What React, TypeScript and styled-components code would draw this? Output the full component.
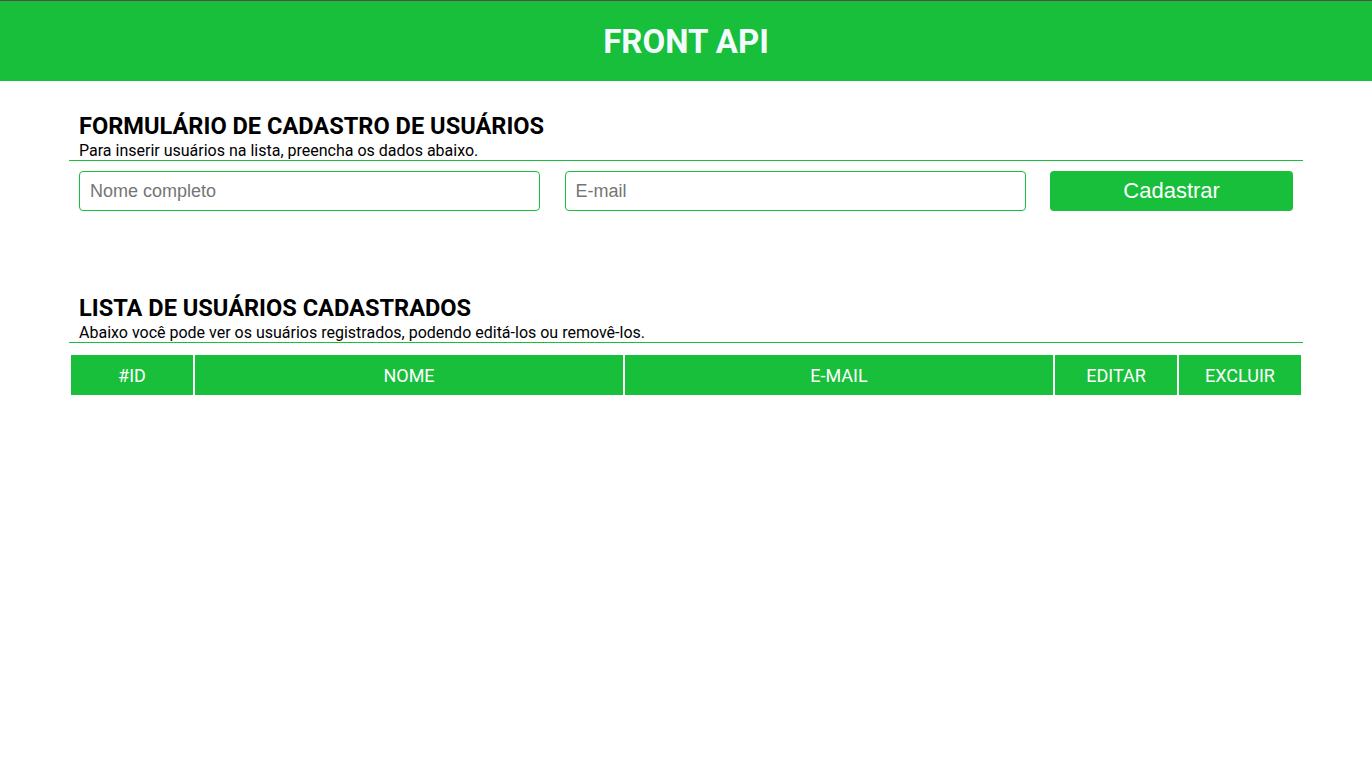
import React from "react";
import styled, { createGlobalStyle } from "styled-components";

const GREEN = "#17bf3b";

const Global = createGlobalStyle`
  html, body { margin: 0; padding: 0; background: #fff; }
  body { font-family: Roboto, "Liberation Sans", Arial, sans-serif; color: #000; }
  * { box-sizing: border-box; }
`;

const Header = styled.header`
  height: 81px;
  border-top: 1px solid #4d4d4d;
  background: ${GREEN};
  display: flex;
  align-items: center;
  justify-content: center;
`;

const Title = styled.h1`
  margin: 0;
  font-family: Roboto, sans-serif;
  font-weight: 700;
  font-size: 33px;
  color: #f4fbff;
  line-height: 1;
`;

const Main = styled.main`
  width: 1234px;
  margin: 0 auto;
`;

const Section = styled.section<{ $top: number }>`
  padding-top: ${(p) => p.$top}px;
`;

const SectionHead = styled.div`
  border-bottom: 1px solid ${GREEN};
  padding: 0 10px;
`;

const Heading = styled.h2`
  margin: 0;
  font-size: 23.6px;
  font-weight: 700;
  line-height: 29px;
`;

const Sub = styled.p`
  margin: 0;
  font-size: 16px;
  line-height: 19px;
`;

const FormRow = styled.form`
  display: grid;
  grid-template-columns: 38% 38% 1fr;
  column-gap: 2%;
  padding: 10px 10px 0;
`;

const Input = styled.input`
  height: 40px;
  border: 1px solid ${GREEN};
  border-radius: 4px;
  padding: 0 10px;
  font-family: "Liberation Sans", Arial, sans-serif;
  font-size: 18px;
  outline: none;
  &::placeholder { color: #757575; }
`;

const Button = styled.button`
  height: 40px;
  border: none;
  border-radius: 4px;
  background: ${GREEN};
  color: #fff;
  font-family: "Liberation Sans", Arial, sans-serif;
  font-size: 22px;
  cursor: pointer;
`;

const Table = styled.table`
  width: 1234px;
  margin-top: 10px;
  border-spacing: 2px;
  table-layout: fixed;
`;

const Th = styled.th<{ $w: number }>`
  width: ${(p) => p.$w}px;
  height: 40px;
  padding: 0;
  background: ${GREEN};
  color: #fff;
  font-weight: 400;
  font-size: 18px;
  text-align: center;
`;

const cols: [string, number][] = [
  ["#ID", 122],
  ["NOME", 428],
  ["E-MAIL", 428],
  ["EDITAR", 122],
  ["EXCLUIR", 122],
];

export default function App() {
  return (
    <>
      <Global />
      <Header>
        <Title>FRONT API</Title>
      </Header>
      <Main>
        <Section $top={31}>
          <SectionHead>
            <Heading>FORMULÁRIO DE CADASTRO DE USUÁRIOS</Heading>
            <Sub>Para inserir usuários na lista, preencha os dados abaixo.</Sub>
          </SectionHead>
          <FormRow onSubmit={(e) => e.preventDefault()}>
            <Input placeholder="Nome completo" />
            <Input placeholder="E-mail" />
            <Button type="submit">Cadastrar</Button>
          </FormRow>
        </Section>
        <Section $top={83}>
          <SectionHead>
            <Heading>LISTA DE USUÁRIOS CADASTRADOS</Heading>
            <Sub>Abaixo você pode ver os usuários registrados, podendo editá-los ou removê-los.</Sub>
          </SectionHead>
          <Table>
            <thead>
              <tr>
                {cols.map(([c, w]) => (
                  <Th key={c} $w={w}>{c}</Th>
                ))}
              </tr>
            </thead>
          </Table>
        </Section>
      </Main>
    </>
  );
}
